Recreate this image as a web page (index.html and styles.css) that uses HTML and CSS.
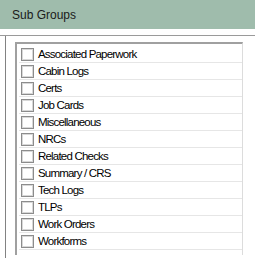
FILE: index.html
```html
<!DOCTYPE html>
<html>
<head>
<meta charset="utf-8">
<link rel="stylesheet" href="styles.css">
</head>
<body>
<div class="header">Sub Groups</div>
<div class="panel">
  <div class="frame">
    <div class="list">
      <div class="row"><span class="box"></span><span class="label">Associated Paperwork</span></div>
      <div class="row"><span class="box"></span><span class="label">Cabin Logs</span></div>
      <div class="row"><span class="box"></span><span class="label">Certs</span></div>
      <div class="row"><span class="box"></span><span class="label">Job Cards</span></div>
      <div class="row"><span class="box"></span><span class="label">Miscellaneous</span></div>
      <div class="row"><span class="box"></span><span class="label">NRCs</span></div>
      <div class="row"><span class="box"></span><span class="label">Related Checks</span></div>
      <div class="row"><span class="box"></span><span class="label">Summary / CRS</span></div>
      <div class="row"><span class="box"></span><span class="label">Tech Logs</span></div>
      <div class="row"><span class="box"></span><span class="label">TLPs</span></div>
      <div class="row"><span class="box"></span><span class="label">Work Orders</span></div>
      <div class="row"><span class="box"></span><span class="label">Workforms</span></div>
    </div>
  </div>
</div>
</body>
</html>
```
FILE: styles.css
```css
html, body {
  margin: 0;
  padding: 0;
  background: #ffffff;
}
body {
  width: 255px;
  height: 258px;
  overflow: hidden;
  font-family: "Liberation Sans", Arial, sans-serif;
  font-size: 11px;
  color: #000000;
}
.header {
  height: 29px;
  background: #9fbcac;
  color: #1a1a1a;
  padding-left: 12px;
  line-height: 30px;
  font-size: 12px;
}
.panel {
  margin-top: 6px;
  border-top: 1px solid #9a9a9a;
  padding-left: 5px;
}
.frame {
  border-left: 1px solid #828282;
  height: 217px;
  padding: 6px 0 0 9px;
}
.list {
  width: 225px;
  height: 209px;
  border-top: 2px solid #a0a0a0;
  border-left: 2px solid #a0a0a0;
  border-right: 1px solid #dcdcdc;
  padding-top: 2px;
}
.row {
  height: 16px;
  margin-left: 2px;
  border-bottom: 1px solid #e6e6e6;
  display: flex;
  align-items: flex-end;
}
.box {
  width: 11px;
  height: 11px;
  border: 1px solid #8c8c8c;
  box-shadow: inset 0 0 0 1px #d8d8d8;
  background: #ffffff;
  margin-left: 2px;
  margin-bottom: 1px;
  flex: none;
}
.label {
  margin-left: 4px;
  margin-bottom: 1px;
  font-size: 11.5px;
  line-height: 13px;
  letter-spacing: -0.8px;
  white-space: nowrap;
}
```
